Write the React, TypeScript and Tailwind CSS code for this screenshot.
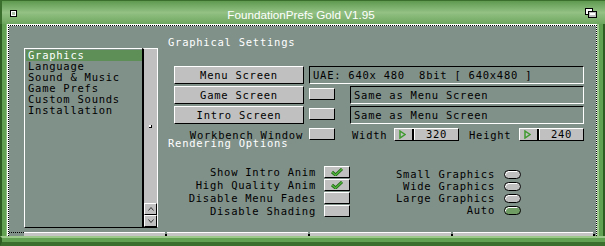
const raised = 'border border-t-white border-l-white border-r-black border-b-black bg-[#c0c0c0]';
const recessed = 'border border-t-black border-l-black border-r-white border-b-white';

function TitleBar() {
  return (
    <div className="flex h-[24px] border-l-2 border-t border-[#3a6f2e] bg-gradient-to-b from-[#5f9a50] via-[#93c184] to-[#6ea65e]">
      <div className="ml-[8px] mt-[9px] flex h-[7px] w-[7px] items-center justify-center border border-black bg-white">
        <div className="h-[3px] w-[3px] bg-[#a9bda5]" />
      </div>
      <div className="flex-1 pt-[7px] text-center">
        <span className="font-['Liberation_Sans',sans-serif] text-[11.7px] leading-[13px] tracking-normal text-white">
          FoundationPrefs Gold V1.95
        </span>
      </div>
      <svg className="mr-[8px] mt-[7px]" width="12" height="10" viewBox="0 0 12 10">
        <rect x="0.5" y="0.5" width="7" height="6" fill="#fff" stroke="#000" />
        <rect x="3.5" y="3.5" width="8" height="6" fill="#c0c0c0" stroke="#000" />
        <rect x="5" y="5" width="5" height="2" fill="#fff" />
      </svg>
    </div>
  );
}

function ListView() {
  const items = ['Graphics', 'Language', 'Sound & Music', 'Game Prefs', 'Custom Sounds', 'Installation'];
  return (
    <div className="flex h-[180px]">
      <div className="h-[180px] w-[118px] border-b border-l border-t border-b-black border-l-white border-t-white pt-[1px] pl-[1px]">
        {items.map((item, i) => (
          <div
            key={item}
            className={
              'h-[11px] whitespace-pre pl-[2px] leading-[11px] ' +
              (i === 0 ? 'bg-[#5d8f57] text-white' : 'text-black')
            }
          >
            {item}
          </div>
        ))}
      </div>
      <div className="flex h-[180px] w-[16px] flex-col border-l-2 border-r border-t border-b border-l-black border-r-white border-t-white border-b-black bg-[#c0c0c0]">
        <div className="flex flex-1 items-center justify-center">
          <div className="h-[3px] w-[3px] border-b border-r border-black bg-white" />
        </div>
        <div className={raised + ' flex h-[12px] items-center justify-center'}>
          <svg width="6" height="4" viewBox="0 0 6 4">
            <path d="M0.5 3.5 L3 0.5 L5.5 3.5" fill="none" stroke="#333" strokeWidth="1" />
          </svg>
        </div>
        <div className={raised + ' flex h-[12px] items-center justify-center'}>
          <svg width="6" height="4" viewBox="0 0 6 4">
            <path d="M0.5 0.5 L3 3.5 L5.5 0.5" fill="none" stroke="#333" strokeWidth="1" />
          </svg>
        </div>
      </div>
    </div>
  );
}

function IntGadget({ value }: { value: string }) {
  return (
    <div className={raised + ' mt-[1px] flex h-[13px] w-[65px]'}>
      <div className="flex w-[19px] items-center border-r-2 border-r-black pl-[4px]">
        <svg width="7" height="9" viewBox="0 0 7 9">
          <path d="M1 1 L6 4.5 L1 8 Z" fill="none" stroke="#3f9a2f" strokeWidth="1.5" />
        </svg>
      </div>
      <div className="flex flex-1 items-center justify-center border-l border-l-white leading-[11px]">{value}</div>
    </div>
  );
}

function Check() {
  return (
    <svg width="14" height="8" viewBox="0 0 14 8">
      <path d="M2 4 L5.5 7 L12 1" fill="none" stroke="#1f5f14" strokeWidth="3" />
      <path d="M2 4 L5.5 7 L12 1" fill="none" stroke="#4fb43a" strokeWidth="1.6" />
    </svg>
  );
}

function RightPanel() {
  const checks: [string, boolean][] = [
    ['Show Intro Anim', true],
    ['High Quality Anim', true],
    ['Disable Menu Fades', false],
    ['Disable Shading', false],
  ];
  const radios: [string, boolean][] = [
    ['Small Graphics', false],
    ['Wide Graphics', false],
    ['Large Graphics', false],
    ['Auto', true],
  ];
  return (
    <div className="ml-[10px] flex w-[417px] flex-col">
      <div className="mt-[11px] h-[11px] whitespace-pre leading-[11px] text-white">Graphical Settings</div>
      <div className="flex flex-col pl-[6px]">
        <div className="mt-[18px] flex h-[18px]">
          <div className={raised + ' flex w-[130px] items-center justify-center leading-[11px]'}>Menu Screen</div>
          <div className={recessed + ' ml-[5px] flex w-[275px] items-center whitespace-pre pl-[3px] leading-[11px]'}>
            UAE: 640x 480  8bit [ 640x480 ]
          </div>
        </div>
        {['Game Screen', 'Intro Screen'].map((label) => (
          <div key={label} className="mt-[2px] flex h-[18px]">
            <div className={raised + ' flex w-[130px] items-center justify-center leading-[11px]'}>{label}</div>
            <div className={raised + ' ml-[5px] mt-[2px] h-[12px] w-[26px]'} />
            <div className={recessed + ' ml-[15px] flex w-[234px] items-center whitespace-pre pl-[3px] leading-[11px]'}>
              Same as Menu Screen
            </div>
          </div>
        ))}
        <div className="mt-[3px] flex h-[14px] items-start">
          <div className="mt-[3px] w-[130px] whitespace-pre pr-[1px] text-right leading-[11px]">Workbench Window</div>
          <div className={raised + ' ml-[5px] mt-[1px] h-[12px] w-[26px]'} />
          <div className="ml-[17px] mt-[3px] w-[42px] leading-[11px]">Width</div>
          <IntGadget value="320" />
          <div className="ml-[10px] mt-[3px] w-[50px] leading-[11px]">Height</div>
          <IntGadget value="240" />
        </div>
      </div>
      <div className="mt-[-3px] h-[11px] whitespace-pre leading-[11px] text-white">Rendering Options</div>
      <div className="mt-[17px] flex">
        <div className="flex w-[182px] flex-col gap-[1px]">
          {checks.map(([label, on]) => (
            <div key={label} className="flex h-[12px] items-center justify-end">
              <span className="mr-[8px] whitespace-pre leading-[11px]">{label}</span>
              <div className={raised + ' flex h-[12px] w-[26px] items-center justify-center'}>{on && <Check />}</div>
            </div>
          ))}
        </div>
        <div className="mt-[2px] flex w-[171px] flex-col">
          {radios.map(([label, on]) => (
            <div key={label} className="flex h-[12px] items-center justify-end">
              <span className="mr-[9px] whitespace-pre leading-[11px]">{label}</span>
              <div
                className={
                  'h-[9px] w-[17px] rounded-full border border-black shadow-[inset_1px_1px_0_white] ' +
                  (on ? 'bg-[#6f9c63]' : 'bg-[#c0c0c0]')
                }
              />
            </div>
          ))}
        </div>
      </div>
    </div>
  );
}

function BottomBar() {
  const seg = 'h-[4px] border-t border-t-white bg-[#c4c4c4]';
  const notch = (
    <div className="flex h-[4px] w-[2px] flex-col justify-end">
      <div className="h-[2px] bg-black" />
    </div>
  );
  return (
    <div className="flex h-[4px]">
      <div className="flex h-[4px] w-[15px] items-start">
        <div className="h-[1px] w-full border-t border-dotted border-black" />
      </div>
      <div className={seg + ' w-[141px]'} />
      {notch}
      <div className={seg + ' w-[141px]'} />
      {notch}
      <div className={seg + ' w-[141px]'} />
      {notch}
      <div className={seg + ' w-[140px]'} />
      {notch}
    </div>
  );
}

export default function App() {
  return (
    <div className="flex h-[246px] w-[605px] flex-col overflow-hidden bg-[#62a052] font-['DejaVu_Sans_Mono',monospace] text-[10.5px] tracking-[0.75px] text-black">
      <TitleBar />
      <div className="flex h-[212px]">
        <div className="w-[7px] border-l-2 border-r border-l-[#2e5d22] border-r-[#8fc27e] bg-[#62a052]" />
        <div className="flex w-[590px] flex-col border-l border-t border-white bg-white">
          <div className="flex flex-1 flex-col border border-b-0 border-dotted border-black bg-[#80918a] bg-clip-padding">
            <div className="flex h-[206px]">
              <div className="ml-[15px] mt-[22px]">
                <ListView />
              </div>
              <RightPanel />
            </div>
            <BottomBar />
          </div>
        </div>
        <div className="w-[8px] border-l-2 border-r-2 border-l-[#9dc98c] border-r-[#2e5d22] bg-[#62a052]" />
      </div>
      <div className="h-[10px] border-t-2 border-b-4 border-l-2 border-t-[#9dc98c] border-b-[#3a6f2e] border-l-[#2e5d22] bg-[#62a052]" />
    </div>
  );
}
